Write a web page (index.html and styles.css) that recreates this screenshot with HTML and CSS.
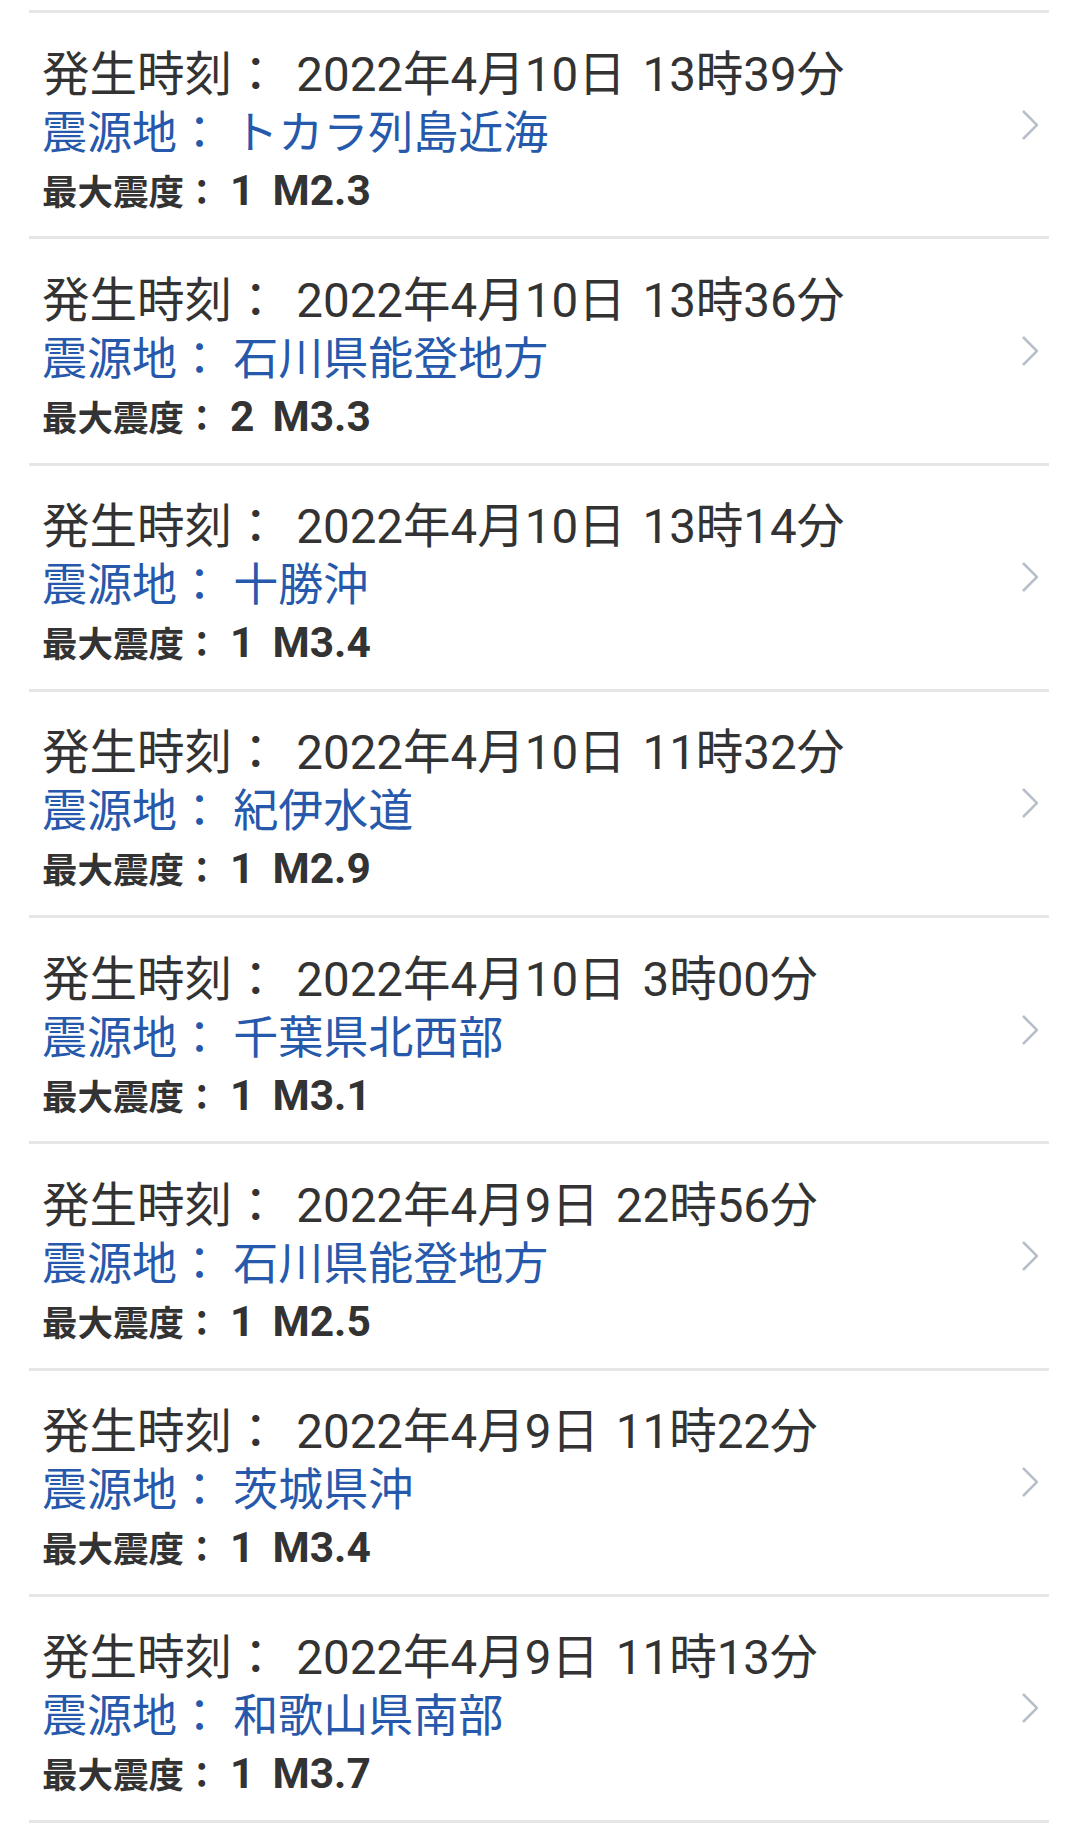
FILE: index.html
```html
<!DOCTYPE html>
<html lang="ja">
<head>
<meta charset="utf-8">
<title>地震情報</title>
<link rel="stylesheet" href="styles.css">
</head>
<body>
<ul class="quake-list">
  <li class="quake">
    <div class="info">
      <div class="time">発生時刻： 2022年4月10日 13時39分</div>
      <div class="place">震源地： トカラ列島近海</div>
      <div class="scale"><span class="label">最大震度：</span> <span class="shindo">1</span>M2.3</div>
    </div>
    <svg class="chev" viewBox="0 0 16 30" width="16" height="30"><polyline points="1,1 15,15 1,29"/></svg>
  </li>
  <li class="quake">
    <div class="info">
      <div class="time">発生時刻： 2022年4月10日 13時36分</div>
      <div class="place">震源地： 石川県能登地方</div>
      <div class="scale"><span class="label">最大震度：</span> <span class="shindo">2</span>M3.3</div>
    </div>
    <svg class="chev" viewBox="0 0 16 30" width="16" height="30"><polyline points="1,1 15,15 1,29"/></svg>
  </li>
  <li class="quake">
    <div class="info">
      <div class="time">発生時刻： 2022年4月10日 13時14分</div>
      <div class="place">震源地： 十勝沖</div>
      <div class="scale"><span class="label">最大震度：</span> <span class="shindo">1</span>M3.4</div>
    </div>
    <svg class="chev" viewBox="0 0 16 30" width="16" height="30"><polyline points="1,1 15,15 1,29"/></svg>
  </li>
  <li class="quake">
    <div class="info">
      <div class="time">発生時刻： 2022年4月10日 11時32分</div>
      <div class="place">震源地： 紀伊水道</div>
      <div class="scale"><span class="label">最大震度：</span> <span class="shindo">1</span>M2.9</div>
    </div>
    <svg class="chev" viewBox="0 0 16 30" width="16" height="30"><polyline points="1,1 15,15 1,29"/></svg>
  </li>
  <li class="quake">
    <div class="info">
      <div class="time">発生時刻： 2022年4月10日 3時00分</div>
      <div class="place">震源地： 千葉県北西部</div>
      <div class="scale"><span class="label">最大震度：</span> <span class="shindo">1</span>M3.1</div>
    </div>
    <svg class="chev" viewBox="0 0 16 30" width="16" height="30"><polyline points="1,1 15,15 1,29"/></svg>
  </li>
  <li class="quake">
    <div class="info">
      <div class="time">発生時刻： 2022年4月9日 22時56分</div>
      <div class="place">震源地： 石川県能登地方</div>
      <div class="scale"><span class="label">最大震度：</span> <span class="shindo">1</span>M2.5</div>
    </div>
    <svg class="chev" viewBox="0 0 16 30" width="16" height="30"><polyline points="1,1 15,15 1,29"/></svg>
  </li>
  <li class="quake">
    <div class="info">
      <div class="time">発生時刻： 2022年4月9日 11時22分</div>
      <div class="place">震源地： 茨城県沖</div>
      <div class="scale"><span class="label">最大震度：</span> <span class="shindo">1</span>M3.4</div>
    </div>
    <svg class="chev" viewBox="0 0 16 30" width="16" height="30"><polyline points="1,1 15,15 1,29"/></svg>
  </li>
  <li class="quake">
    <div class="info">
      <div class="time">発生時刻： 2022年4月9日 11時13分</div>
      <div class="place">震源地： 和歌山県南部</div>
      <div class="scale"><span class="label">最大震度：</span> <span class="shindo">1</span>M3.7</div>
    </div>
    <svg class="chev" viewBox="0 0 16 30" width="16" height="30"><polyline points="1,1 15,15 1,29"/></svg>
  </li>
</ul>
</body>
</html>
```
FILE: styles.css
```css
html, body {
  margin: 0;
  padding: 0;
  background: #ffffff;
}
body {
  font-family: Roboto, "Noto Sans CJK JP", sans-serif;
  color: #333333;
}
.quake-list {
  list-style: none;
  margin: 10px 20px 0 29px;
  padding: 0;
  border-bottom: 3px solid #e6e6e6;
}
.quake {
  box-sizing: border-box;
  height: 226.25px;
  border-top: 3px solid #e6e6e6;
  display: flex;
  align-items: center;
  justify-content: space-between;
  padding: 0 11px 0 13px;
}
.info {
  display: flex;
  flex-direction: column;
  padding-top: 16px;
}
.time {
  font-size: 47.5px;
  line-height: 60px;
  word-spacing: 5px;
  white-space: nowrap;
}
.place {
  font-size: 45px;
  line-height: 58px;
  color: #2659ab;
  white-space: nowrap;
}
.scale {
  font-size: 42.5px;
  line-height: 56px;
  font-weight: 700;
  white-space: nowrap;
}
.scale .label {
  font-size: 35.5px;
}
.shindo {
  margin-right: 18px;
}
.chev {
  flex: none;
  fill: none;
  stroke: #b6bfca;
  stroke-width: 2.6;
}
```
